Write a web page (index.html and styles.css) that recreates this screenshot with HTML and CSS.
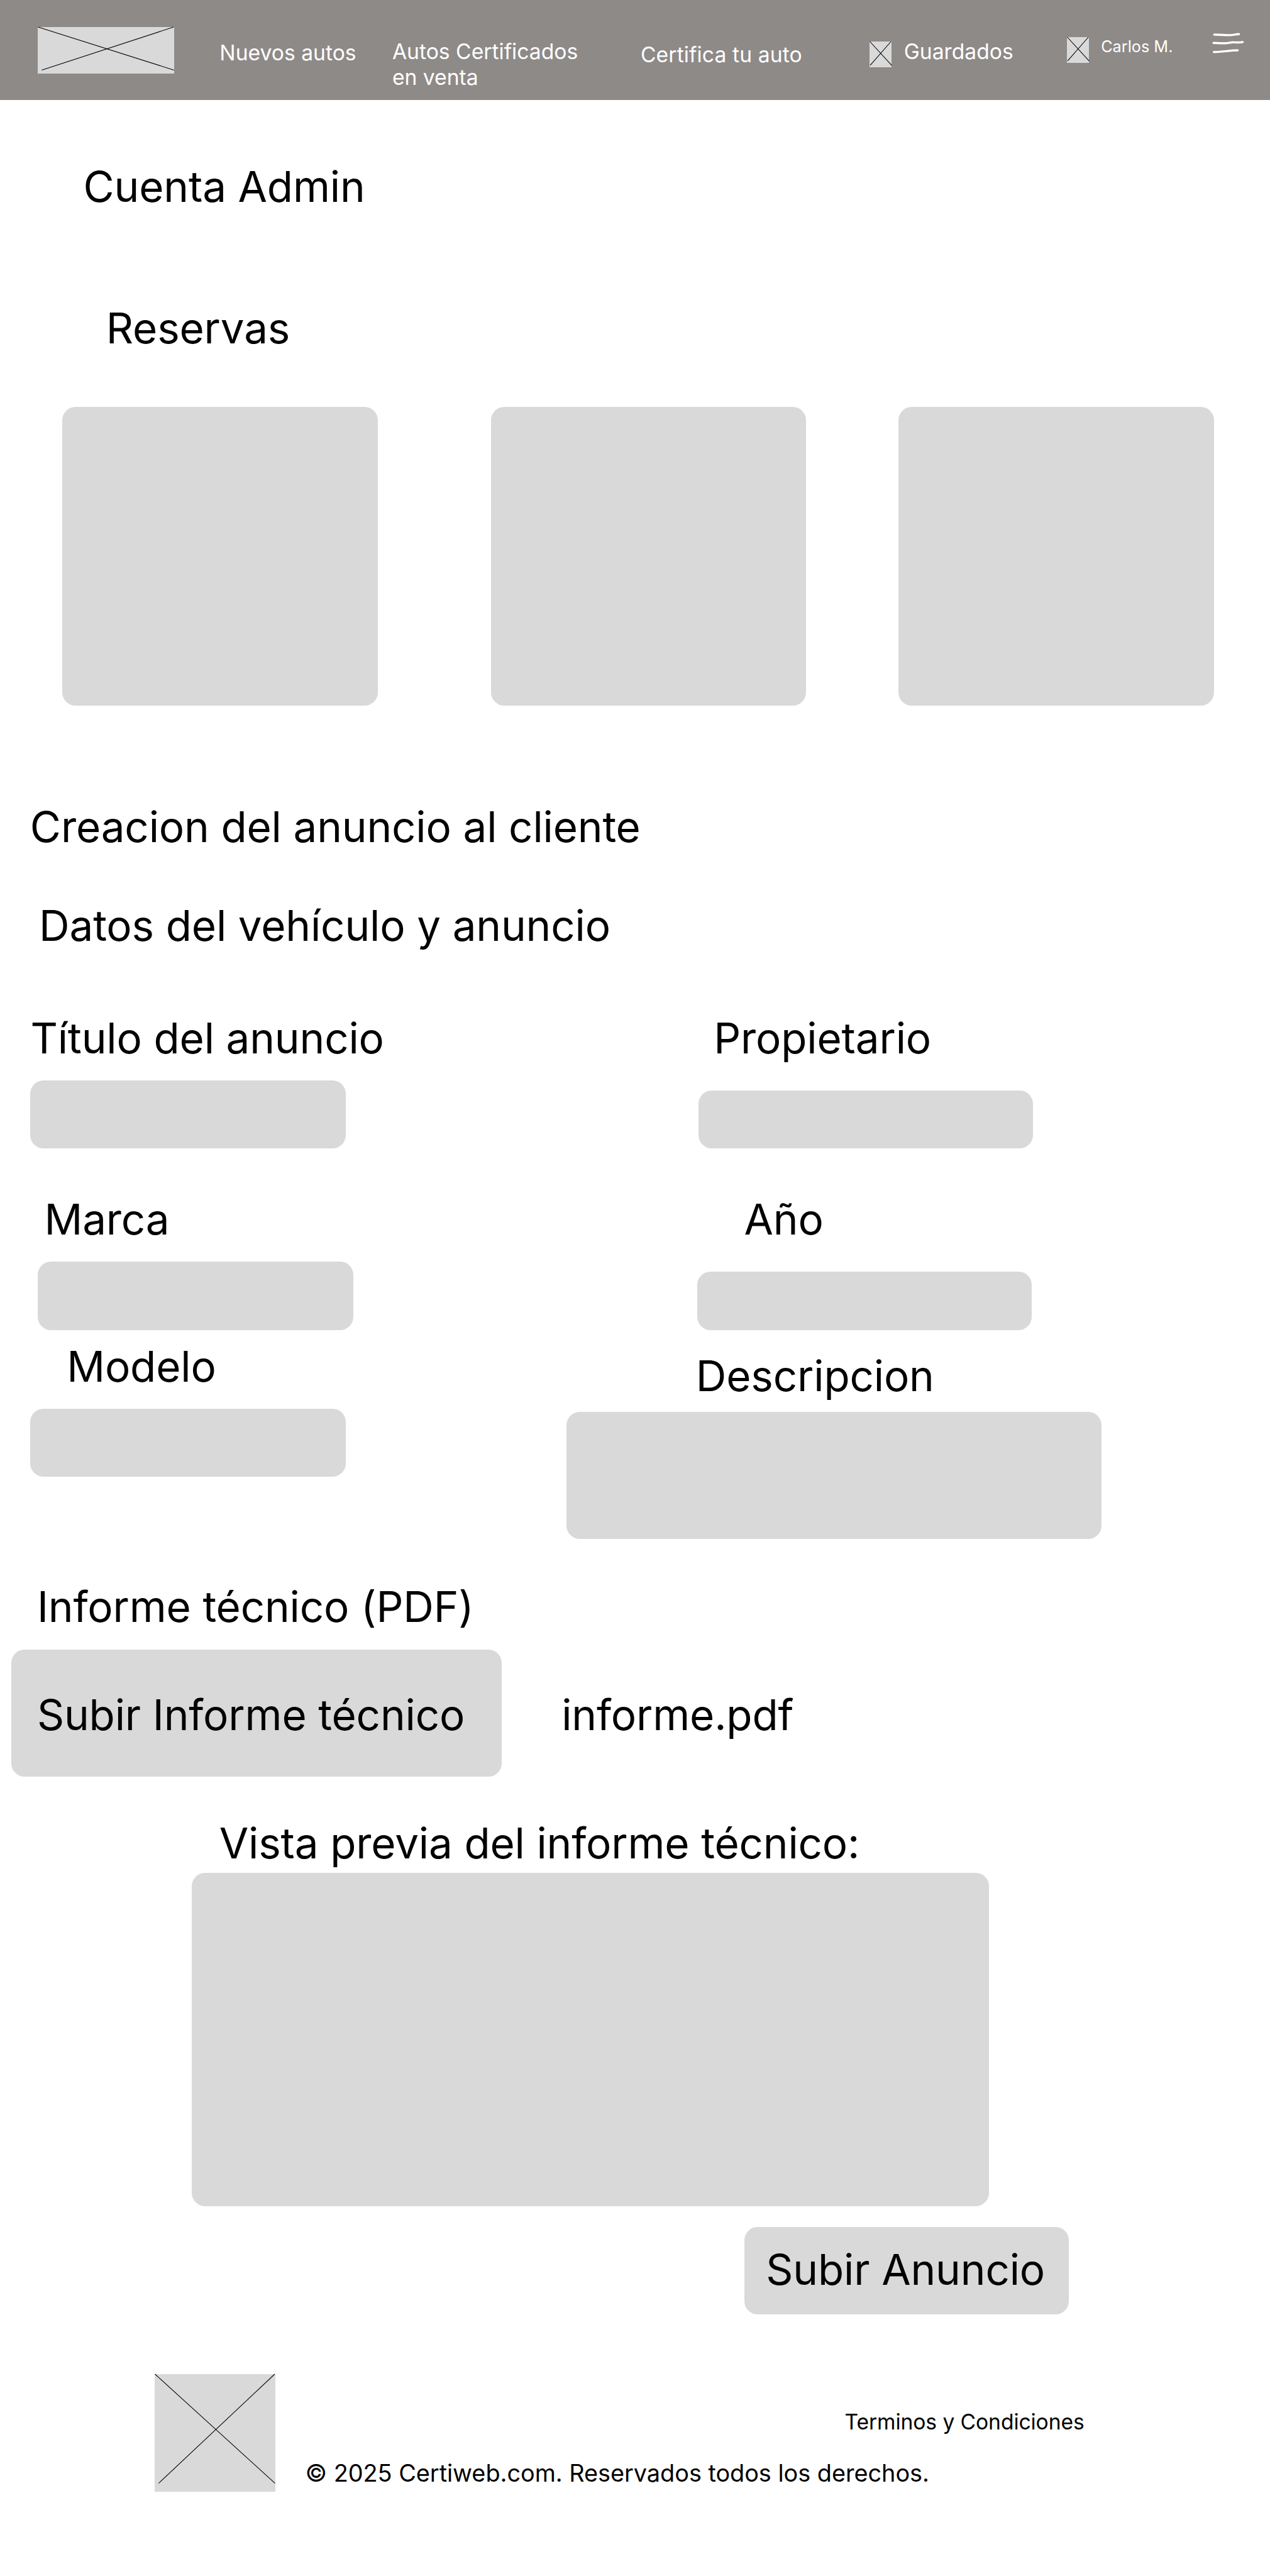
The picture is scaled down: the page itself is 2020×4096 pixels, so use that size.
FILE: index.html
```html
<!DOCTYPE html>
<html lang="es">
<head>
<meta charset="utf-8">
<title>Certiweb - Cuenta Admin</title>
<link rel="stylesheet" href="styles.css">
</head>
<body>
<header class="topbar">
  <svg class="logo" viewBox="0 0 412 140"><path d="M1 0L412 130M411 0L12 130"/></svg>
  <nav class="nav">
    <a class="nav-new">Nuevos autos</a>
    <a class="nav-sale">Autos Certificados<br>en venta</a>
    <a class="nav-certify">Certifica tu auto</a>
  </nav>
  <svg class="icon icon-saved" viewBox="0 0 66 78"><path d="M1 0L67 72M65 0L2 72"/></svg>
  <a class="saved">Guardados</a>
  <svg class="icon icon-user" viewBox="0 0 66 78"><path d="M1 0L67 72M65 0L2 72"/></svg>
  <a class="user">Carlos M.</a>
  <svg class="menu" viewBox="0 0 100 64"><path d="M8.300 7.700C26 8 42 9.200 56 9.200C67 9.200 71 6.300 83 6.300M6 32.700C16 32.700 28 34.300 43 33.700C55 33 56 31 64 31C72 31 82 32.500 94.300 30.200M7 60.300C32 60.300 54 55.500 79 55.300"/></svg>
</header>
<main>
  <h1 class="title">Cuenta Admin</h1>
  <section>
    <h2 class="bookings-title">Reservas</h2>
    <div class="cards">
      <div class="card"></div>
      <div class="card"></div>
      <div class="card"></div>
    </div>
  </section>
  <section>
    <h2 class="create-title">Creacion del anuncio al cliente</h2>
    <h3 class="data-title">Datos del vehículo y anuncio</h3>
    <div class="form">
      <div class="col">
        <div class="field field-title"><label>Título del anuncio</label><div class="input"></div></div>
        <div class="field field-brand"><label>Marca</label><div class="input"></div></div>
        <div class="field field-model"><label>Modelo</label><div class="input"></div></div>
      </div>
      <div class="col col-right">
        <div class="field field-owner"><label>Propietario</label><div class="input"></div></div>
        <div class="field field-year"><label>Año</label><div class="input"></div></div>
        <div class="field field-desc"><label>Descripcion</label><div class="input"></div></div>
      </div>
    </div>
  </section>
  <section>
    <h3 class="report-title">Informe técnico (PDF)</h3>
    <div class="upload">
      <button class="upload-btn">Subir Informe técnico</button>
      <span class="file">informe.pdf</span>
    </div>
    <h3 class="preview-title">Vista previa del informe técnico:</h3>
    <div class="preview"></div>
    <button class="submit">Subir Anuncio</button>
  </section>
</main>
<footer class="footer">
  <svg class="footer-logo" viewBox="0 0 364 356"><path d="M1 0L364 330M363 0L12 330"/></svg>
  <div class="legal">
    <a class="terms">Terminos y Condiciones</a>
    <p class="copy">© 2025 Certiweb.com. Reservados todos los derechos.</p>
  </div>
</footer>
</body>
</html>
```
FILE: styles.css
```css
/* 1rem = 100 design pixels on a 3840px wide canvas */
html { font-size: 52.6042px; }
* { box-sizing: border-box; margin: 0; padding: 0; }
body {
  width: 38.4rem;
  height: 77.86rem;
  overflow: hidden;
  background: #fff;
  color: #000;
  font-family: Inter, "Liberation Sans", sans-serif;
}
h1, h2, h3, label, button, .file {
  display: block;
  font: 400 1.28rem/1.54rem Inter, "Liberation Sans", sans-serif;
  letter-spacing: -.003rem;
  white-space: nowrap;
}
svg { display: block; flex: none; overflow: visible; }
svg path { fill: none; stroke: #000; stroke-width: 2; }

/* Top bar */
.topbar {
  display: flex;
  align-items: flex-start;
  height: 3.02rem;
  background: #8e8a88;
  color: #fff;
  font-size: .64rem;
  line-height: .78rem;
  white-space: nowrap;
}
.logo { width: 4.12rem; height: 1.4rem; margin: .82rem 0 0 1.14rem; background: #d9d9d9; }
.nav { display: flex; width: 21.04rem; padding-left: 1.38rem; }
.nav-new { width: 5.22rem; padding-top: 1.193rem; }
.nav-sale { width: 7.51rem; padding-top: 1.153rem; }
.nav-certify { padding-top: 1.253rem; letter-spacing: .002rem; }
.icon { width: .66rem; height: .78rem; background: #d9d9d9; }
.icon-saved { margin-top: 1.26rem; }
.saved { width: 5.3rem; padding: 1.153rem 0 0 .37rem; }
.icon-user { margin-top: 1.12rem; }
.user { width: 3.71rem; padding: 1.116rem 0 0 .37rem; font-size: .48rem; line-height: .58rem; }
.menu { width: 1rem; height: .64rem; margin-top: .97rem; }
.menu path { stroke: #fff; stroke-width: 6.5; stroke-linecap: round; }

/* Bookings */
.title { margin: 1.842rem 0 0 2.52rem; }
.bookings-title { margin: 2.74rem 0 0 3.21rem; }
.cards { display: flex; margin: 1.615rem 0 0 1.88rem; }
.card { width: 9.54rem; height: 9.04rem; border-radius: .4rem; background: #d9d9d9; }
.card:nth-child(2) { margin: 0 2.78rem 0 3.42rem; }

/* Ad form */
.create-title { margin: 2.89rem 0 0 .91rem; }
.data-title { margin: 1.43rem 0 0 1.18rem; }
.form { display: flex; margin-top: 1.864rem; }
.col { width: 17.12rem; }
.input { width: 9.54rem; height: 2.06rem; margin-top: .516rem; border-radius: .4rem; background: #d9d9d9; }
.field-title { padding-left: .92rem; }
.field-brand { margin-top: 1.368rem; padding-left: 1.14rem; }
.field-brand label { margin-left: .2rem; }
.field-model { margin-top: .321rem; padding-left: .92rem; }
.field-model label { margin-left: 1.1rem; }
.col-right .input { width: 10.12rem; height: 1.76rem; margin-top: .816rem; }
.field-owner { padding-left: 4rem; }
.field-owner label { margin-left: .46rem; }
.field-year { margin-top: 1.368rem; padding-left: 3.96rem; }
.field-year label { margin-left: 1.42rem; }
.field-desc { margin-top: .62rem; }
.field-desc label { margin-left: 3.92rem; }
.col-right .field-desc .input { width: 16.18rem; height: 3.84rem; margin-top: .324rem; }

/* Technical report */
.report-title { margin: 1.264rem 0 0 1.12rem; }
.upload { display: flex; margin: .536rem 0 0 .35rem; }
button { border: 0; border-radius: .4rem; background: #d9d9d9; color: #000; text-align: left; }
.upload-btn { width: 14.82rem; height: 3.84rem; padding: 1.2rem 0 1.1rem .77rem; }
.file { margin: 1.2rem 0 0 1.81rem; }
.preview-title { margin: 1.244rem 0 0 6.63rem; }
.preview { width: 24.1rem; height: 10.08rem; margin: .116rem 0 0 5.8rem; border-radius: .4rem; background: #d9d9d9; }
.submit { width: 9.82rem; height: 2.64rem; margin: .64rem 0 0 22.5rem; padding: .503rem 0 .597rem .66rem; }

/* Footer */
.footer { display: flex; margin: 1.8rem 0 0 4.68rem; white-space: nowrap; }
.footer-logo { width: 3.64rem; height: 3.56rem; background: #d9d9d9; }
.legal { display: flex; flex-direction: column; margin-left: .91rem; }
.terms { margin: 1.051rem 0 0 16.31rem; font-size: .64rem; line-height: .78rem; letter-spacing: -.002rem; }
.copy { margin-top: .727rem; font-size: .72rem; line-height: .87rem; letter-spacing: -.0008rem; }
```
